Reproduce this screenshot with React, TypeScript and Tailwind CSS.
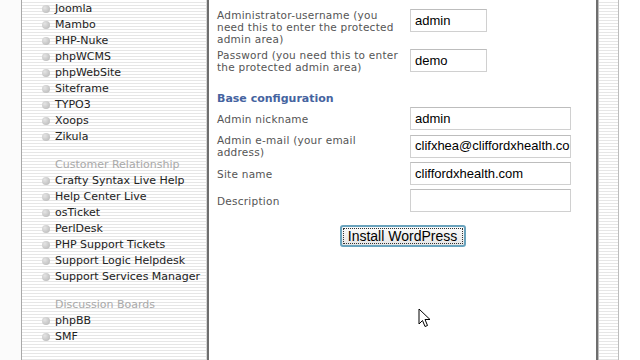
import React from "react";

const STRIPES =
  "bg-[repeating-linear-gradient(to_bottom,#ffffff_0px,#ffffff_2px,#e6e6e6_2px,#e6e6e6_3px)]";

const groups: { title?: string; items: string[] }[] = [
  {
    items: ["Joomla", "Mambo", "PHP-Nuke", "phpWCMS", "phpWebSite", "Siteframe", "TYPO3", "Xoops", "Zikula"],
  },
  {
    title: "Customer Relationship",
    items: [
      "Crafty Syntax Live Help",
      "Help Center Live",
      "osTicket",
      "PerlDesk",
      "PHP Support Tickets",
      "Support Logic Helpdesk",
      "Support Services Manager",
    ],
  },
  { title: "Discussion Boards", items: ["phpBB", "SMF"] },
  { title: "E-Commerce", items: [] },
];

function Bullet() {
  return (
    <span className="w-[8px] h-[8px] rounded-full bg-[radial-gradient(circle_at_35%_35%,#e4e4e4,#b4b4b4)] shrink-0" />
  );
}

function Field({ value, wide }: { value: string; wide?: boolean }) {
  return (
    <div
      className={`${wide ? "w-[161px]" : "w-[77px]"} h-[23px] shrink-0 border border-[#d0d0d0] border-t-[#bdbdbd] bg-white px-[4px] flex items-center overflow-hidden whitespace-nowrap font-['Liberation_Sans',Arial,sans-serif] text-[13px] text-black`}
    >
      {value}
    </div>
  );
}

function Label({ children }: { children: React.ReactNode }) {
  return <div className="w-[186px] mr-[7px] leading-[12px] tracking-[0.25px]">{children}</div>;
}

export default function App() {
  return (
    <div className="relative w-[640px] h-[360px] overflow-hidden bg-white flex">
      {/* left margin */}
      <div className="w-[21px] bg-[#fbfbfb]" />
      {/* sidebar */}
      <div className={`w-[186px] border-l border-[#a8a8a8] border-r border-r-[#d8d8d8] ${STRIPES} font-['DejaVu_Sans',Verdana,sans-serif] text-[11px]`}>
        <div className="pl-[20px] mt-[1px]">
          {groups.map((g, gi) => (
            <div key={gi} className={gi > 0 ? "mt-[12px]" : ""}>
              {g.title && (
                <div className="h-[16px] flex items-center pl-[13px] text-[#a9a9a9]">{g.title}</div>
              )}
              {g.items.map((it) => (
                <div key={it} className="h-[16px] flex items-center gap-[5px] text-[#222]">
                  <Bullet />
                  <span>{it}</span>
                </div>
              ))}
            </div>
          ))}
        </div>
      </div>
      {/* main */}
      <div className="w-[391px] border-l-2 border-[#6e6e6e] border-r-2 border-r-[#6e6e6e] bg-white font-['DejaVu_Sans',Verdana,sans-serif] text-[10.5px] text-[#555]">
        <div className="pl-[8px] mt-[-10px]">
          <div className="h-[14px] font-bold text-[#4563a0] text-[11px] leading-[14px]">Admin access data</div>
          <div className="mt-[5px] flex flex-col gap-[4px]">
            <div className="flex items-start">
              <Label>Administrator-username (you need this to enter the protected admin area)</Label>
              <Field value="admin" />
            </div>
            <div className="flex items-start">
              <Label>Password (you need this to enter the protected admin area)</Label>
              <Field value="demo" />
            </div>
          </div>
          <div className="mt-[19px] h-[14px] font-bold text-[#4563a0] text-[11px] leading-[14px]">Base configuration</div>
          <div className="mt-[1px] flex flex-col gap-[4px]">
            <div className="flex items-center">
              <Label>Admin nickname</Label>
              <Field value="admin" wide />
            </div>
            <div className="flex items-center">
              <Label>Admin e-mail (your email address)</Label>
              <Field value="clifxhea@cliffordxhealth.com" wide />
            </div>
            <div className="flex items-center">
              <Label>Site name</Label>
              <Field value="cliffordxhealth.com" wide />
            </div>
            <div className="flex items-center">
              <Label>Description</Label>
              <Field value="" wide />
            </div>
          </div>
          <div className="mt-[13px] flex justify-center pr-[8px]">
            <button className="w-[126px] h-[22px] rounded-[3px] border-2 border-[#6aa3bd] bg-[linear-gradient(to_bottom,#fbfbfb,#e6e6e6)] p-[1px] flex">
              <span className="flex-1 flex items-center justify-center border border-dotted border-[#333] font-['Liberation_Sans',Arial,sans-serif] text-[14px] text-black leading-none">
                Install WordPress
              </span>
            </button>
          </div>
        </div>
      </div>
      {/* right strip */}
      <div className={`w-[21px] border-l border-[#bdbdbd] border-r border-r-[#bdbdbd] ${STRIPES}`} />
      <div className="flex-1 bg-white" />
      {/* mouse cursor */}
      <svg className="absolute left-[418px] top-[308px]" width="14" height="21" viewBox="0 0 14 21">
        <path d="M1 1 L1 16 L4.5 12.5 L7 18.5 L9.5 17.5 L7 11.5 L12 11.5 Z" fill="#fff" stroke="#000" strokeWidth="1" strokeLinejoin="round" />
      </svg>
    </div>
  );
}
